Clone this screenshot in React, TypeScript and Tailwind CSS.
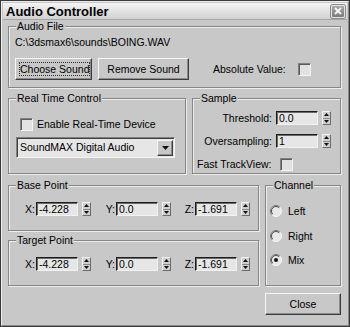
import React from 'react';

const raised =
  'border border-t-[#f6f6f6] border-l-[#f6f6f6] border-r-[#3c3c3c] border-b-[#3c3c3c] shadow-[inset_-1px_-1px_0_#8c8c8c]';

function Group({ label, className, children }: { label: string; className?: string; children?: React.ReactNode }) {
  return (
    <div className={`relative border border-[#868686] shadow-[1px_1px_0_#eeeeee,inset_1px_1px_0_#eeeeee] ${className ?? ''}`}>
      <span className="absolute -top-[7px] left-[7px] bg-[#c8c8c8] px-[1px] leading-[13px] whitespace-nowrap">{label}</span>
      {children}
    </div>
  );
}

const CheckBox = () => (
  <div className="w-[13px] h-[13px] shrink-0 bg-[#e2e2e2] border border-t-[#808080] border-l-[#808080] border-r-[#f4f4f4] border-b-[#f4f4f4] shadow-[inset_1px_1px_0_#5a5a5a]" />
);

const Spinner = () => (
  <div className="ml-[4px] w-[9px] h-[14px] shrink-0 flex flex-col bg-[#cfcfcf] border border-t-[#f2f2f2] border-l-[#f2f2f2] border-r-[#6c6c6c] border-b-[#6c6c6c]">
    <div className="flex-1 flex items-center justify-center">
      <svg width="5" height="3" viewBox="0 0 5 3">
        <path d="M2.5 0L5 3H0z" fill="#111" />
      </svg>
    </div>
    <div className="h-px bg-[#8a8a8a]" />
    <div className="flex-1 flex items-center justify-center">
      <svg width="5" height="3" viewBox="0 0 5 3">
        <path d="M0 0h5L2.5 3z" fill="#111" />
      </svg>
    </div>
  </div>
);

const NumField = ({ value }: { value: string }) => (
  <div className="w-[42px] h-[14px] shrink-0 bg-[#e6e6e6] border border-t-[#1e1e1e] border-l-[#1e1e1e] border-r-[#f2f2f2] border-b-[#f2f2f2] shadow-[inset_1px_1px_0_#6a6a6a] pl-[2px] leading-[12px] overflow-hidden whitespace-nowrap">
    {value}
  </div>
);

const Radio = ({ checked }: { checked?: boolean }) => (
  <svg width="12" height="12" viewBox="0 0 12 12" className="shrink-0">
    <circle cx="6" cy="6" r="5.5" fill="#e8e8e8" />
    <path d="M2.1 9.9 A5.5 5.5 0 0 1 9.9 2.1" stroke="#7a7a7a" fill="none" />
    <path d="M2.8 9.2 A4.5 4.5 0 0 1 9.2 2.8" stroke="#4a4a4a" fill="none" />
    <path d="M9.9 2.1 A5.5 5.5 0 0 1 2.1 9.9" stroke="#f6f6f6" fill="none" />
    {checked && <circle cx="6" cy="6" r="2" fill="#111" />}
  </svg>
);

const PointRow = ({ x, y, z }: { x: string; y: string; z: string }) => (
  <div className="mt-[16px] h-[14px] flex items-center">
    <span className="w-[27px] shrink-0 text-right pr-[1px]">X:</span>
    <NumField value={x} />
    <Spinner />
    <span className="w-[25px] shrink-0 text-right pr-[1px]">Y:</span>
    <NumField value={y} />
    <Spinner />
    <span className="w-[24px] shrink-0 text-right pr-[1px]">Z:</span>
    <NumField value={z} />
    <Spinner />
  </div>
);

export default function App() {
  return (
    <div className="w-[350px] h-[327px] bg-[#c8c8c8] border border-[#3a3a3a] flex flex-col text-black text-[10.5px] leading-[13px] font-['Liberation_Sans',Arial,sans-serif]">
      <div className="flex-1 flex flex-col border border-t-[#ececec] border-l-[#ececec] border-r-[#8a8a8a] border-b-[#8a8a8a] p-[1px]">
        {/* Title bar */}
        <div className="h-[17px] flex items-center justify-between pl-[3px] pr-[2px] bg-gradient-to-b from-[#f4f4f4] via-[#e2e2e2] to-[#d2d2d2] border-b border-[#a6a6a6]">
          <span className="text-[13px] font-bold leading-[17px]">Audio Controller</span>
          <div className="w-[14px] h-[13px] rounded-[2px] bg-gradient-to-b from-[#a8a8a8] to-[#7c7c7c] border border-[#e4e4e4] shadow-[0_0_0_1px_#8a8a8a] flex items-center justify-center">
            <svg width="8" height="8" viewBox="0 0 8 8">
              <path d="M1 1L7 7M7 1L1 7" stroke="#fafafa" strokeWidth="1.8" />
            </svg>
          </div>
        </div>

        {/* Client */}
        <div className="flex-1 flex flex-col pl-[5px] pr-[6px] pt-[6px]">
          <Group label="Audio File" className="h-[62px] flex flex-col">
            <div className="mt-[9px] pl-[6px] whitespace-nowrap">{'C:\\3dsmax6\\sounds\\BOING.WAV'}</div>
            <div className="mt-[9px] pl-[6px] flex items-center">
              <div className={`w-[77px] h-[22px] p-[3px] flex ${raised}`}>
                <div className="flex-1 flex items-center justify-center border border-dotted border-[#333] whitespace-nowrap">
                  Choose Sound
                </div>
              </div>
              <div className={`ml-[6px] w-[91px] h-[22px] flex items-center justify-center whitespace-nowrap ${raised}`}>
                Remove Sound
              </div>
              <span className="ml-[24px] w-[85px] whitespace-nowrap">Absolute Value:</span>
              <CheckBox />
            </div>
          </Group>

          <div className="mt-[10px] flex gap-[6px]">
            <Group label="Real Time Control" className="w-[178px] h-[76px] flex flex-col">
              <div className="mt-[19px] pl-[11px] h-[13px] flex items-center">
                <CheckBox />
                <span className="ml-[4px] whitespace-nowrap">Enable Real-Time Device</span>
              </div>
              <div className="ml-[7px] mt-[6px] w-[159px] h-[21px] flex items-center bg-[#e6e6e6] border border-t-[#808080] border-l-[#808080] border-r-[#f4f4f4] border-b-[#f4f4f4] shadow-[inset_1px_1px_0_#404040] pl-[3px] pr-[1px]">
                <span className="flex-1 whitespace-nowrap">SoundMAX Digital Audio</span>
                <div className={`w-[16px] h-[16px] bg-[#c8c8c8] flex items-center justify-center ${raised}`}>
                  <svg width="7" height="4" viewBox="0 0 7 4">
                    <path d="M0 0h7L3.5 4z" fill="#111" />
                  </svg>
                </div>
              </div>
            </Group>

            <Group label="Sample" className="w-[149px] h-[76px] flex flex-col">
              <div className="mt-[12px] h-[14px] flex items-center">
                <span className="w-[79px] shrink-0 text-right">Threshold:</span>
                <div className="ml-[4px]">
                  <NumField value="0.0" />
                </div>
                <Spinner />
              </div>
              <div className="mt-[9px] h-[14px] flex items-center">
                <span className="w-[79px] shrink-0 text-right">Oversampling:</span>
                <div className="ml-[4px]">
                  <NumField value="1" />
                </div>
                <Spinner />
              </div>
              <div className="mt-[9px] h-[14px] flex items-center">
                <span className="w-[83px] shrink-0 pl-[4px] whitespace-nowrap">Fast TrackView:</span>
                <div className="ml-[4px]">
                  <CheckBox />
                </div>
              </div>
            </Group>
          </div>

          <div className="mt-[11px] flex gap-[6px]">
            <div className="w-[251px] flex flex-col">
              <Group label="Base Point" className="h-[46px]">
                <PointRow x="-4.228" y="0.0" z="-1.691" />
              </Group>
              <Group label="Target Point" className="mt-[9px] h-[46px]">
                <PointRow x="-4.228" y="0.0" z="-1.691" />
              </Group>
            </div>
            <Group label="Channel" className="w-[76px] h-[101px] flex flex-col pl-[4px]">
              <div className="mt-[19px] h-[12px] flex items-center">
                <Radio />
                <span className="ml-[6px]">Left</span>
              </div>
              <div className="mt-[13px] h-[12px] flex items-center">
                <Radio />
                <span className="ml-[6px]">Right</span>
              </div>
              <div className="mt-[12px] h-[12px] flex items-center">
                <Radio checked />
                <span className="ml-[6px]">Mix</span>
              </div>
            </Group>
          </div>

          <div className="mt-[7px] flex justify-end">
            <div className={`w-[76px] h-[22px] flex items-center justify-center ${raised}`}>Close</div>
          </div>
        </div>
      </div>
    </div>
  );
}
